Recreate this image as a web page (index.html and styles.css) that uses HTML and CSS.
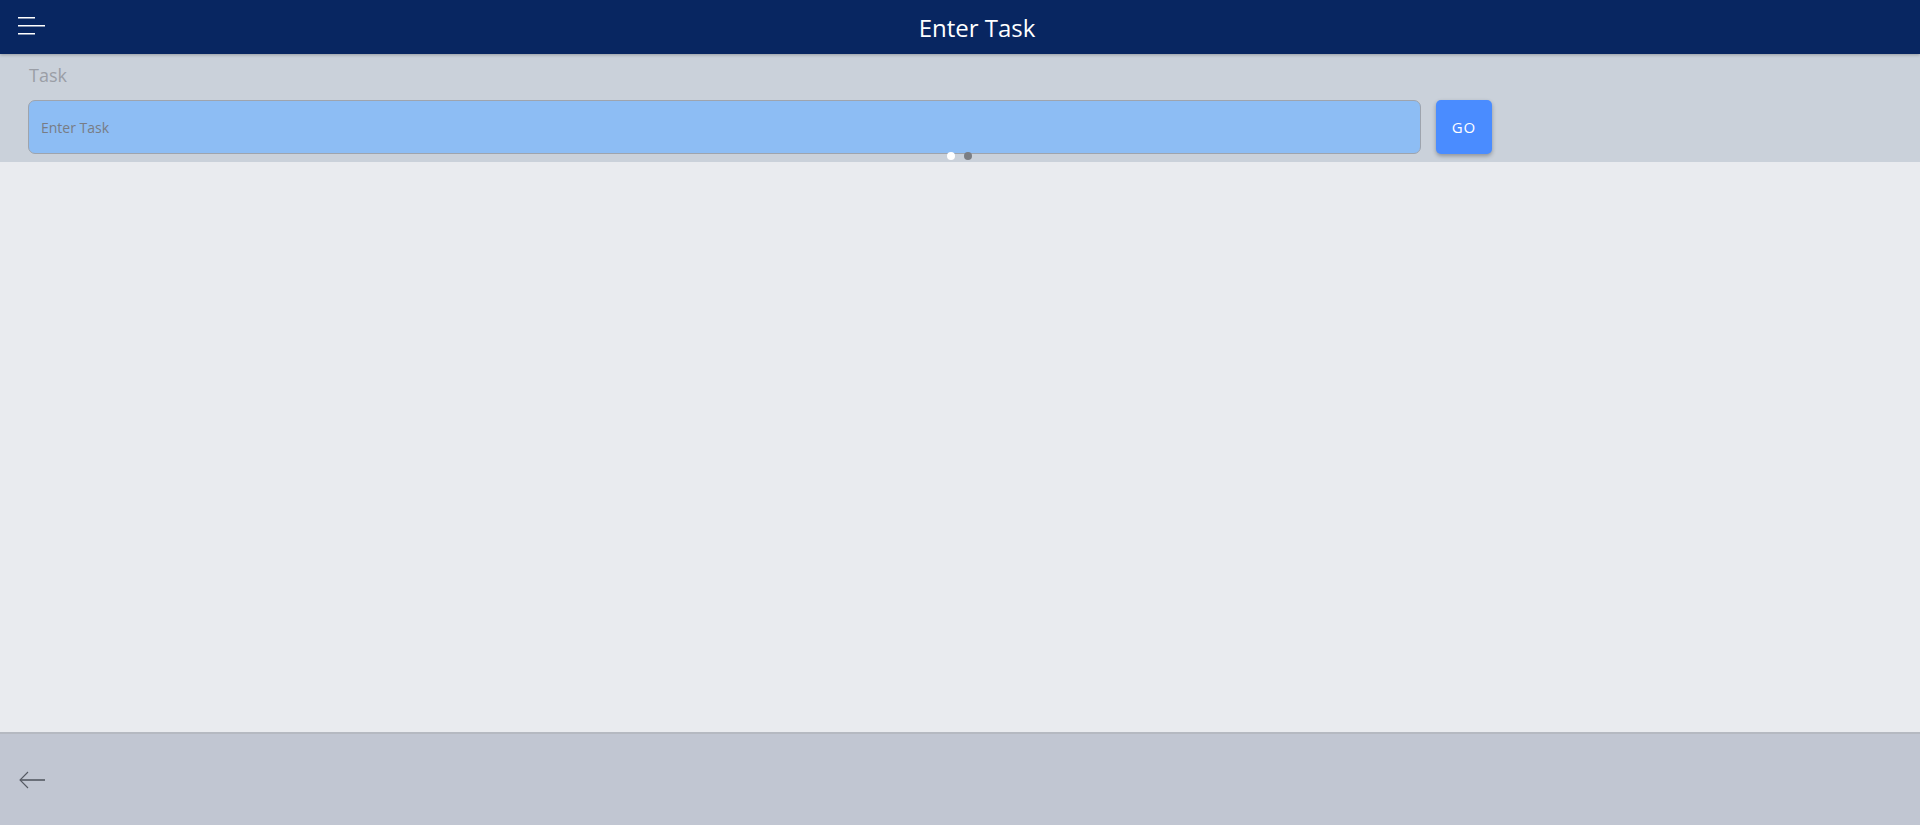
FILE: index.html
```html
<!DOCTYPE html>
<html>
<head>
<meta charset="utf-8">
<link rel="stylesheet" href="styles.css">
</head>
<body>
<div class="app">
  <header class="topbar">
    <button class="menu-btn" aria-label="menu">
      <svg width="28" height="20" viewBox="0 0 28 20">
        <rect x="0" y="0" width="17" height="1.5" fill="#ffffff"/>
        <rect x="0" y="8" width="27" height="1.5" fill="#ffffff"/>
        <rect x="0" y="16" width="17" height="1.5" fill="#ffffff"/>
      </svg>
    </button>
    <h1 class="title">Enter Task</h1>
  </header>
  <section class="task-panel">
    <div class="task-label">Task</div>
    <div class="task-row">
      <input class="task-input" type="text" placeholder="Enter Task">
      <button class="go-btn">GO</button>
    </div>
    <div class="dots"><span class="dot active"></span><span class="dot"></span></div>
  </section>
  <main class="content"></main>
  <footer class="bottombar">
    <button class="back-btn" aria-label="back">
      <svg width="28" height="18" viewBox="0 0 28 18">
        <path d="M1 9 H26" stroke="#555a63" stroke-width="1.6" fill="none"/>
        <path d="M9 1 L1 9 L9 17" stroke="#555a63" stroke-width="1.1" fill="none"/>
      </svg>
    </button>
  </footer>
</div>
</body>
</html>
```
FILE: styles.css
```css
* { box-sizing: border-box; }
html, body { margin: 0; padding: 0; height: 100%; }
body {
  font-family: "Open Sans", "Noto Sans", sans-serif;
  background: #e9ebef;
}
.app {
  display: flex;
  flex-direction: column;
  height: 825px;
}
.topbar {
  height: 54px;
  background: #082661;
  display: flex;
  align-items: center;
  position: relative;
  z-index: 2;
  box-shadow: 0 1px 3px rgba(0,0,0,0.25);
}
.menu-btn {
  background: none;
  border: none;
  padding: 0;
  margin-left: 18px;
  width: 28px;
  height: 20px;
  display: flex;
  cursor: pointer;
  margin-top: 0;
}
.title {
  flex: 1;
  margin: 0;
  text-align: center;
  color: #ffffff;
  font-family: "Open Sans", sans-serif;
  font-weight: 400;
  font-size: 24px;
  padding-right: 12px;
  letter-spacing: 0;
}
.task-panel {
  height: 108px;
  background: #cad1da;
  padding: 10px 28px 0 28px;
  position: relative;
}
.task-label {
  color: #9a9ea6;
  font-size: 18px;
  line-height: 22px;
  height: 36px;
  padding-left: 1px;
}
.task-row {
  display: flex;
  align-items: center;
  gap: 15px;
}
.task-input {
  width: 1393px;
  height: 54px;
  background: #8dbdf4;
  border: 1px solid #9ea4ad;
  border-radius: 7px;
  padding: 0 12px;
  font-family: "Open Sans", sans-serif;
  font-size: 14px;
  color: #333;
  outline: none;
}
.task-input::placeholder { color: #787c84; }
.go-btn {
  width: 56px;
  height: 54px;
  background: #4a8cff;
  border: none;
  border-radius: 5px;
  color: #ffffff;
  font-family: "Open Sans", sans-serif;
  font-size: 15px;
  letter-spacing: 1px;
  box-shadow: 0 2px 4px rgba(0,0,0,0.3);
  cursor: pointer;
}
.dots {
  position: absolute;
  left: 947px;
  top: 98px;
  display: flex;
  gap: 9px;
}
.dot {
  width: 8px;
  height: 8px;
  border-radius: 50%;
  background: #7b7e83;
}
.dot.active { background: #ffffff; }
.content {
  flex: 1;
  background: #e9ebef;
}
.bottombar {
  height: 93px;
  background: #c1c6d2;
  border-top: 2px solid #b5b9c1;
  display: flex;
  align-items: center;
  padding-left: 19px;
}
.back-btn {
  background: none;
  border: none;
  padding: 0;
  display: flex;
  cursor: pointer;
  margin-top: 0;
}
```
